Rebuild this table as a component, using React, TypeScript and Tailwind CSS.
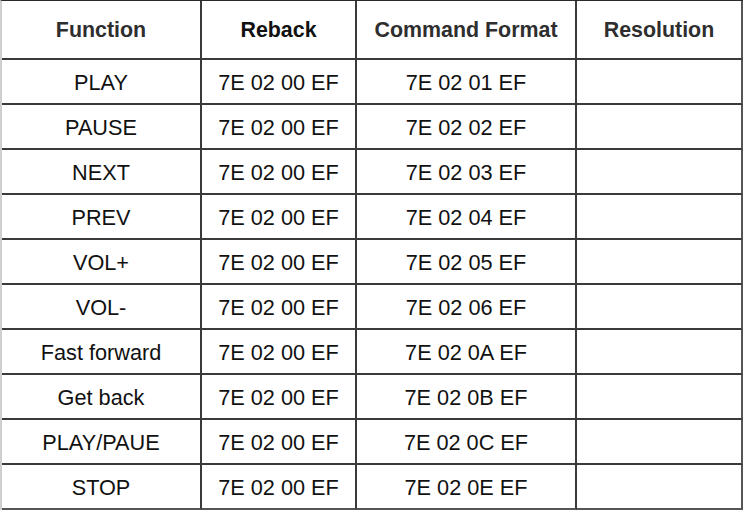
import React from "react";

const rows: [string, string, string][] = [
  ["PLAY", "7E 02 00 EF", "7E 02 01 EF"],
  ["PAUSE", "7E 02 00 EF", "7E 02 02 EF"],
  ["NEXT", "7E 02 00 EF", "7E 02 03 EF"],
  ["PREV", "7E 02 00 EF", "7E 02 04 EF"],
  ["VOL+", "7E 02 00 EF", "7E 02 05 EF"],
  ["VOL-", "7E 02 00 EF", "7E 02 06 EF"],
  ["Fast forward", "7E 02 00 EF", "7E 02 0A EF"],
  ["Get back", "7E 02 00 EF", "7E 02 0B EF"],
  ["PLAY/PAUE", "7E 02 00 EF", "7E 02 0C EF"],
  ["STOP", "7E 02 00 EF", "7E 02 0E EF"],
];

const grid = "grid grid-cols-[200px_155px_220px_166px]";
const cell = "flex items-center justify-center border-r-2 border-b-2 border-[#3a3a3a]";

export default function App() {
  return (
    <div
      className="w-[744px] h-[516px] bg-white overflow-hidden"
      style={{ fontFamily: '"Liberation Sans", Arial, sans-serif' }}
    >
      <div className="w-[743px] border-l-2 border-l-[#cfcfcf] border-t border-t-[#2a2a2a]">
        <div className={`${grid} h-[59px] text-[21.4px] font-bold text-[#2e2e2e]`}>
          <div className={`${cell} pt-[2px]`}>Function</div>
          <div className={`${cell} pt-[2px] text-[#111]`}>Reback</div>
          <div className={`${cell} pt-[2px]`}>Command Format</div>
          <div className={`${cell} pt-[2px] border-r-[#555]`}>Resolution</div>
        </div>
        {rows.map((r, i) => (
          <div key={i} className={`${grid} h-[45px] text-[21.7px] text-[#111]`}>
            <div className={`${cell} pt-[4px] ${i === rows.length - 1 ? "border-b-[#555]" : ""}`}>{r[0]}</div>
            <div className={`${cell} pt-[4px] ${i === rows.length - 1 ? "border-b-[#555]" : ""}`}>{r[1]}</div>
            <div className={`${cell} pt-[4px] ${i === rows.length - 1 ? "border-b-[#555]" : ""}`}>{r[2]}</div>
            <div className={`${cell} border-r-[#555] ${i === rows.length - 1 ? "border-b-[#555]" : ""}`}></div>
          </div>
        ))}
      </div>
    </div>
  );
}
